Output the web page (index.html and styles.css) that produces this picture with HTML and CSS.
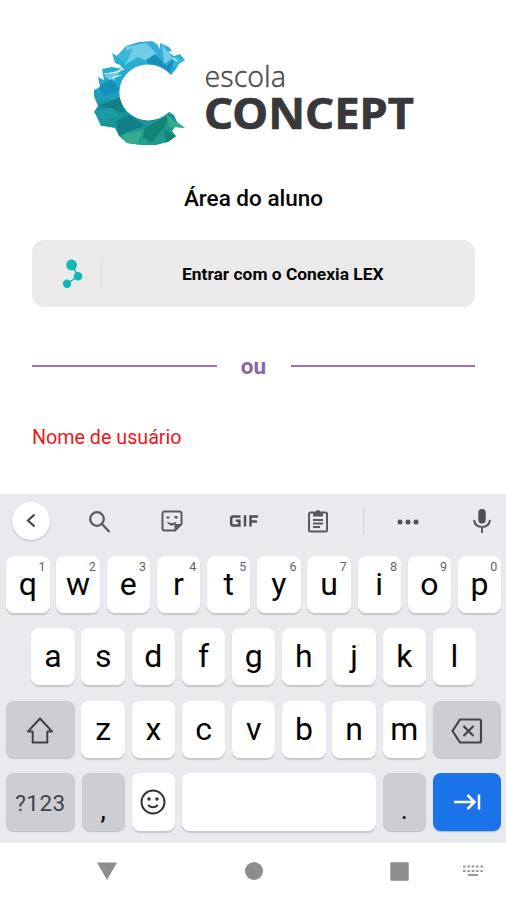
FILE: index.html
```html
<!DOCTYPE html>
<html lang="pt-BR">
<head>
<meta charset="utf-8">
<title>Escola Concept</title>
<link rel="stylesheet" href="styles.css">
</head>
<body>
<main class="login">
  <svg class="logo" width="330" height="116" viewBox="90 36 330 116" role="img" aria-label="escola CONCEPT">
    <defs>
      <linearGradient id="ring" x1="0" y1="0" x2="0" y2="1">
        <stop offset="0" stop-color="#35b3d6"/><stop offset=".45" stop-color="#1fa6cc"/>
        <stop offset=".65" stop-color="#158f9c"/><stop offset="1" stop-color="#1fa18b"/>
      </linearGradient>
      <clipPath id="shape"><path d="M112 53 117 56 126 46 139 42 152 41 157 44 160 49 160 43 169 47 172 51 168 52 174 56 180 54 185 60 179 64 176 69 171 75A29 28 0 1 0 169 112L174 115 177 122 185 128 175 127 172 131 176 136 168 142 156 145 141 145 127 143 119 136 115 128 103 126 101 126 96 115 94 112 98 106 94 96 94 90 100 87 98 77 104 80 102 69 112 67 123 69 120 65 115 63Z"/></clipPath>
    </defs>
    <g clip-path="url(#shape)">
      <path fill="url(#ring)" d="M92 40H187V147H92Z"/>
      <path fill="#72cbe7" d="M126 47 146 43 157 54 149 62 138 57 125 65ZM162 45 173 58 164 64ZM104 76 122 68 113 82Z"/>
      <path fill="#168fbb" d="M146 60 155 54 166 66 174 60 169 75 150 67ZM98 87 112 79 120 90 104 96Z"/>
      <path fill="#36b8d9" d="M116 55 133 48 126 64ZM174 56 185 60 174 67Z"/>
      <path fill="#117f86" d="M99 106 120 97 125 113 108 108ZM116 121 130 115 145 126 129 131 119 136Z"/>
      <path fill="#1b9ca4" d="M95 111 112 108 119 116 102 120Z"/>
      <path fill="#138374" d="M145 128 169 115 164 128 151 143 143 137ZM164 129 177 137 166 143Z"/>
      <path fill="#35ad8d" d="M122 135 143 130 137 145 128 144ZM166 113 175 122 185 128 169 127Z"/>
      <path fill="none" stroke="#e5f7fb" stroke-width="1.200" d="M104 74 117 72 124 69M112 78 121 75M173 58 177 61"/>
    </g>
    <text class="brand-light" x="204.500" y="87" textLength="81.500" lengthAdjust="spacingAndGlyphs">escola</text>
    <text class="brand-bold" x="204" y="128.800" textLength="210" lengthAdjust="spacingAndGlyphs">CONCEPT</text>
  </svg>
  <h1>Área do aluno</h1>
  <button class="sso">
    <svg class="lex" width="22" height="30" viewBox="0 0 22 30"><path d="m10 6 6 11-11 8" fill="none" stroke="#12b7b6" stroke-width="1.500"/><g fill="#12b7b6"><circle cx="9.600" cy="6" r="5.400"/><circle cx="16" cy="17.300" r="4.300"/><circle cx="5" cy="24.700" r="4.200"/></g></svg>
    <span class="rule"></span>
    <span class="sso-label">Entrar com o Conexia LEX</span>
  </button>
  <div class="or"><span>ou</span></div>
  <label class="user">Nome de usuário</label>
</main>
<section class="keyboard">
  <div class="tools">
    <span class="back"><svg width="38" height="38" viewBox="0 0 38 38"><path d="m22.500 12.500-6.500 6 6.500 6" fill="none" stroke="#444649" stroke-width="2.200"/></svg></span>
    <svg class="search" width="24" height="24" viewBox="0 0 24 24"><g fill="none" stroke="#595b5e" stroke-width="2.300"><circle cx="9" cy="9" r="6.800"/><path d="m14 14 7.500 8"/></g></svg>
    <svg class="sticker" width="22" height="22" viewBox="0 0 22 22"><path d="M3.500 1.500h15a2 2 0 0 1 2 2V14l-6.500 6.500H3.500a2 2 0 0 1-2-2v-15a2 2 0 0 1 2-2Z" fill="none" stroke="#595b5e" stroke-width="2"/><path d="M13.500 20v-6H20ZM5.500 6.500h3v2h-3Zm8-0.500h3v2.500h-3ZM6 11.500q5 3 9.500 0-1 4-4.500 4-3.500 0-5-4Z" fill="#595b5e"/></svg>
    <svg class="gif" width="30" height="14" viewBox="0 0 30 14"><path d="M11.500 2.400H4.200Q2.200 2.400 2.200 4.400V9.400Q2.200 11.400 4.200 11.400H10.400V6.800H6.800M16 1.200V12.600M21.500 12.600V2.400H29M21.500 7.400H28" fill="none" stroke="#4f5154" stroke-width="2.500"/></svg>
    <svg class="clip" width="22" height="26" viewBox="0 0 22 26"><path d="M3.500 4.500h15q1.500 0 1.500 1.500v16q0 1.500-1.500 1.500h-15Q2 23.500 2 22V6q0-1.500 1.500-1.500Z" fill="none" stroke="#595b5e" stroke-width="2"/><path d="M6 4h2.500a2.600 2.600 0 0 1 5 0H16v4.500H6ZM6 11h10v2H6Zm0 3.500h10v2H6ZM6 18h7v2H6Z" fill="#595b5e"/></svg>
    <span class="bar"></span>
    <svg class="dots" width="22" height="6" viewBox="0 0 22 6"><g fill="#515356"><circle cx="3" cy="3" r="2.500"/><circle cx="11" cy="3" r="2.500"/><circle cx="19" cy="3" r="2.500"/></g></svg>
    <svg class="mic" width="20" height="26" viewBox="0 0 20 26"><rect x="6.300" y="1" width="7.400" height="14.500" rx="3.700" fill="#4e5053"/><path d="M2 12q1 7 8 7t8-7M10 19v6" fill="none" stroke="#595b5e" stroke-width="2"/></svg>
  </div>
  <div class="keys">
    <div class="row"><b class="key">q<sup>1</sup></b><b class="key">w<sup>2</sup></b><b class="key">e<sup>3</sup></b><b class="key">r<sup>4</sup></b><b class="key">t<sup>5</sup></b><b class="key">y<sup>6</sup></b><b class="key">u<sup>7</sup></b><b class="key">i<sup>8</sup></b><b class="key">o<sup>9</sup></b><b class="key">p<sup>0</sup></b></div>
    <div class="row"><b class="key">a</b><b class="key">s</b><b class="key">d</b><b class="key">f</b><b class="key">g</b><b class="key">h</b><b class="key">j</b><b class="key">k</b><b class="key">l</b></div>
    <div class="row">
      <b class="key wide gray"><svg width="30" height="30" viewBox="0 0 30 30"><path d="M15 3.500 27 16.500h-4.700V27.500H7.700V16.500H3Z" fill="none" stroke="#424449" stroke-width="2" stroke-linejoin="round"/></svg></b><b class="key">z</b><b class="key">x</b><b class="key">c</b><b class="key">v</b><b class="key">b</b><b class="key">n</b><b class="key">m</b><b class="key wide gray erase"><svg width="32" height="26" viewBox="0 0 32 26"><path d="M9 1.500h19.500q1.500 0 1.500 1.500v20q0 1.500-1.500 1.500H9L1.500 13ZM12.500 8l10 10m0-10-10 10" fill="none" stroke="#424449" stroke-width="2.200" stroke-linejoin="round"/></svg></b>
    </div>
    <div class="row last">
      <b class="key wide gray sym">?123</b><b class="key gray punct">,</b><b class="key smile"><svg width="26" height="26" viewBox="0 0 26 26"><circle cx="13" cy="13" r="11.500" fill="none" stroke="#333" stroke-width="2"/><circle cx="9" cy="10" r="1.800" fill="#333"/><circle cx="17" cy="10" r="1.800" fill="#333"/><path d="M8 16q5 4.500 10 0" fill="none" stroke="#333" stroke-width="2"/></svg></b><b class="key space"></b><b class="key gray punct">.</b><b class="key wide blue"><svg width="28" height="18" viewBox="0 0 28 18"><path d="M1 9h20M14.500 2l7 7-7 7M26 1.500v15" fill="none" stroke="#fff" stroke-width="2.500"/></svg></b>
    </div>
  </div>
</section>
<nav class="nav">
  <svg width="20" height="18" viewBox="0 0 20 18"><path d="M0 .5h20L10 18Z" fill="#8d8d8d"/></svg>
  <svg width="18" height="18" viewBox="0 0 18 18"><circle cx="9" cy="9" r="9" fill="#8d8d8d"/></svg>
  <svg width="19" height="19" viewBox="0 0 19 19"><rect x=".3" y=".3" width="18.400" height="18.400" rx="1" fill="#8d8d8d"/></svg>
  <svg width="20" height="12" viewBox="0 0 20 12"><path d="M0 1.500h20M0 6h20" fill="none" stroke="#9a9a9a" stroke-width="2" stroke-dasharray="2.600 1.750"/><path d="M5 10h10" stroke="#9a9a9a" stroke-width="2"/></svg>
</nav>
</body>
</html>
```
FILE: styles.css
```css
* { box-sizing: border-box; }
body {
  margin: 0;
  width: 506px;
  height: 900px;
  overflow: hidden;
  display: flex;
  flex-direction: column;
  background: #fff;
  color: #050505;
  font-family: Roboto, "Liberation Sans", sans-serif;
}
svg { display: block; flex: none; }
.login { height: 493.500px; padding: 36px 31px 0 32px; }
.logo { margin-left: 58px; }
.brand-light { font: 300 30px "Noto Sans", sans-serif; fill: #4c4c4e; stroke: #4c4c4e; stroke-width: .3; }
.brand-bold { font: 700 43px "Noto Sans", sans-serif; fill: #38383a; stroke: #38383a; stroke-width: .6; }
h1 {
  margin: 32px 0 0;
  font-size: 22.500px;
  line-height: 28px;
  font-weight: 500;
  text-align: center;
}
.sso {
  display: flex;
  align-items: center;
  width: 443px;
  height: 67px;
  margin-top: 28px;
  padding: 0 0 0 30px;
  border: 0;
  border-radius: 12px;
  background: #eaeaea;
  color: #050505;
  font: 700 17.400px Roboto, sans-serif;
}
.rule { width: 1px; height: 28px; margin-left: 17px; background: #dcdcdc; }
.sso-label { margin: 0 0 0 80px; white-space: nowrap; }
.or {
  display: flex;
  align-items: center;
  margin-top: 45px;
  height: 28px;
  color: #8b64a6;
  font-size: 22.500px;
  font-weight: 700;
}
.or::before, .or::after { content: ""; flex: 1; height: 2px; background: #9a74b2; }
.or span { width: 74px; text-align: center; line-height: 28px; }
.user { display: block; margin-top: 45px; color: #f01519; font-size: 19.700px; line-height: 26px; }
.keyboard { height: 349px; background: #e8eaed; }
.tools { display: flex; align-items: center; height: 56px; padding-left: 12px; }
.back { width: 38px; height: 38px; margin-top: -1px; border-radius: 50%; background: #fff; box-shadow: 0 1px 2px #bbbdc0; }
.search { margin-left: 38px; }
.sticker { margin: -1px 0 0 49px; }
.gif { margin: -1px 0 0 46px; }
.clip { margin: 0 0 1px 48px; }
.bar { width: 1px; height: 27px; margin-left: 34px; background: #ced0d3; }
.dots { margin-left: 33px; }
.mic { margin: -1px 0 0 53px; }
.keys { display: flex; flex-direction: column; gap: 15.300px; padding-top: 6.500px; }
.row { display: flex; justify-content: center; gap: 6.800px; height: 57px; padding-left: 1.500px; }
.key {
  position: relative;
  display: flex;
  align-items: center;
  justify-content: center;
  width: 43.400px;
  height: 57px;
  padding-bottom: 1px;
  border-radius: 8px;
  background: #fff;
  box-shadow: 0 1.500px 1px #c7c9cd;
  font-size: 32px;
  font-weight: 400;
  line-height: 1;
}
.key sup {
  position: absolute;
  top: 4px;
  right: 4px;
  color: #606266;
  font-size: 12.500px;
  line-height: 13px;
}
.last .key { height: 58px; }
.wide { width: 68.500px; padding-top: 2px; }
.erase { padding-top: 4px; }
.smile { padding-top: 2px; }
.gray { background: #cdced3; box-shadow: 0 1px 1px #bfc1c5; }
.sym { padding-top: 4px; color: #424449; font-size: 22.500px; letter-spacing: .5px; }
.punct { align-items: flex-end; padding-bottom: 7px; font-size: 27px; }
.space { width: 193.900px; }
.blue { background: #1a73e8; box-shadow: 0 1px 1px #a9bcd8; }
.nav { display: flex; align-items: center; height: 57.500px; padding-left: 97px; }
.nav svg:nth-child(2) { margin-left: 127.500px; }
.nav svg:nth-child(3) { margin-left: 127.500px; }
.nav svg:nth-child(4) { margin-left: 54px; }
```
